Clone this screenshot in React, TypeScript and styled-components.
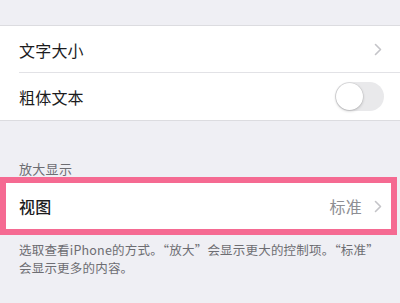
import React, { FC } from "react";
import styled, { createGlobalStyle } from "styled-components";

const GlobalStyle = createGlobalStyle`
	html, body {
		margin: 0;
		padding: 0;
		background: #efeff4;
	}
	body {
		font-family: "Noto Sans CJK SC", "Noto Sans", sans-serif;
		-webkit-font-smoothing: antialiased;
	}
`;

const Page = styled.div`
	width: 400px;
	height: 303px;
	overflow: hidden;
	background: #efeff4;
	padding-top: 25px;
	box-sizing: border-box;
`;

const Group = styled.div`
	background: #fff;
	border-top: 1px solid #dcdce0;
	border-bottom: 1px solid #dcdce0;
`;

const Row = styled.div<{ $divider?: boolean }>`
	height: 47px;
	display: flex;
	align-items: center;
	padding: 0 18px 0 19px;
	position: relative;
	${(p) =>
		p.$divider &&
		`
		&::after {
			content: "";
			position: absolute;
			left: 19px;
			right: 0;
			bottom: 0;
			height: 1px;
			background: #e2e2e6;
		}
	`}
`;

const Label = styled.span<{ $bold?: boolean }>`
	flex: 1;
	font-size: 16px;
	color: #1c1c1e;
	font-weight: ${(p) => (p.$bold ? 500 : 400)};
	letter-spacing: 0.2px;
`;

const Value = styled.span`
	font-size: 16px;
	color: #8e8e93;
	margin-right: 12px;
	letter-spacing: 0.2px;
`;

const Toggle = styled.div`
	width: 49px;
	height: 29px;
	border-radius: 15px;
	background: #e9e9eb;
	position: relative;
	margin-right: -2px;

	&::before {
		content: "";
		position: absolute;
		left: 1px;
		top: 1px;
		width: 27px;
		height: 27px;
		border-radius: 50%;
		background: #fff;
		box-shadow: 0 1px 3px rgba(0, 0, 0, 0.22), 0 0 0 0.5px rgba(0, 0, 0, 0.08);
	}
`;

const SectionHeader = styled.div`
	font-size: 13px;
	color: #6d6d72;
	padding: 39px 19px 0;
	height: 17px;
	line-height: 17px;
	letter-spacing: 0.3px;
`;

const Highlight = styled.div`
	margin-right: 3px;
	border: 6px solid #f56a92;
	background: #fff;
`;

const HighlightRow = styled(Row)`
	height: 46px;
	padding-left: 13px;
	padding-right: 9px;
`;

const Footer = styled.div`
	font-size: 12.5px;
	line-height: 18px;
	color: #6d6d72;
	padding: 6px 19px 0;
	letter-spacing: 0.2px;
`;

const Chevron: FC = () => (
	<svg width="8" height="13" viewBox="0 0 8 13" fill="none">
		<path d="M1.5 1.5 L6.5 6.5 L1.5 11.5" stroke="#c4c4c8" strokeWidth="1.6" strokeLinecap="round" strokeLinejoin="round" />
	</svg>
);

const App: FC = () => {
	return (
		<Page>
			<GlobalStyle />
			<Group>
				<Row $divider>
					<Label>文字大小</Label>
					<Chevron />
				</Row>
				<Row>
					<Label>粗体文本</Label>
					<Toggle />
				</Row>
			</Group>
			<SectionHeader>放大显示</SectionHeader>
			<Highlight>
				<HighlightRow>
					<Label $bold>视图</Label>
					<Value>标准</Value>
					<Chevron />
				</HighlightRow>
			</Highlight>
			<Footer>
				选取查看iPhone的方式。“放大”会显示更大的控制项。“标准”
				<br />
				会显示更多的内容。
			</Footer>
		</Page>
	);
};

export default App;
